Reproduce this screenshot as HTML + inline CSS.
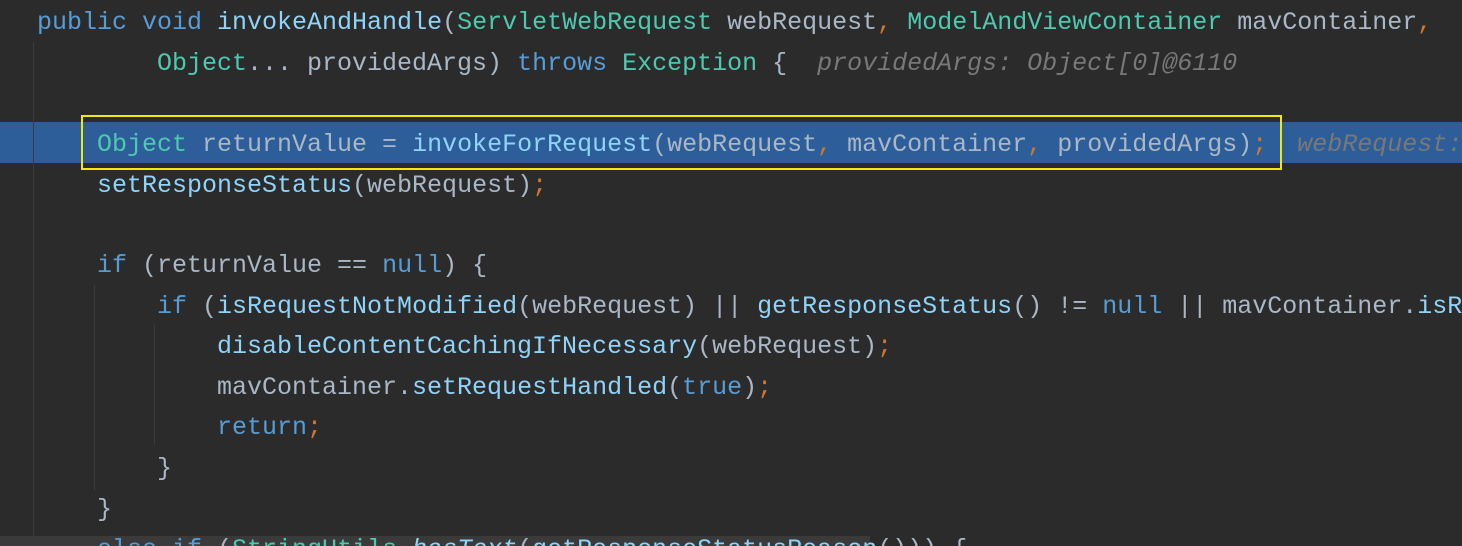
<!DOCTYPE html>
<html><head><meta charset="utf-8"><style>
html,body{margin:0;padding:0;width:1462px;height:546px;overflow:hidden;background:#2b2b2b;}
#w{position:relative;width:1462px;height:546px;overflow:hidden;}
.l{position:absolute;left:0;height:41px;line-height:41px;white-space:pre;font-family:"Liberation Mono",monospace;font-size:25px;color:#a9b7c6;}
.k{color:#569cd6}.m{color:#8fd3f8}.t{color:#4ec9b0}.o{color:#cc7832}.h{color:#787878;font-style:italic}
.g{position:absolute;width:1px;background:#3c3c3c}
</style></head><body><div id="w">
<div style="position:absolute;left:0;top:122px;width:1462px;height:41px;background:#2d5e99"></div>
<div class="g" style="left:33px;top:42px;height:500px"></div>
<div class="g" style="left:94px;top:285px;height:205px"></div>
<div class="g" style="left:154px;top:325px;height:120px"></div>
<div style="position:absolute;left:0;top:536px;width:870px;height:10px;background:#3a3a3a"></div>
<div class="l" style="top:2px;left:37px"><span class="k">public void </span><span class="m">invokeAndHandle</span>(<span class="t">ServletWebRequest</span> webRequest<span class="o">, </span><span class="t">ModelAndViewContainer</span> mavContainer<span class="o">,</span></div>
<div class="l" style="top:43px;left:157px"><span class="t">Object</span>... providedArgs) <span class="k">throws</span> <span class="t">Exception</span> {  <span class="h">providedArgs: Object[0]@6110</span></div>
<div class="l" style="top:124px;left:97px"><span class="t">Object</span> returnValue = <span class="m">invokeForRequest</span>(webRequest<span class="o">, </span>mavContainer<span class="o">, </span>providedArgs)<span class="o">;</span>  <span class="h">webRequest:</span></div>
<div class="l" style="top:165px;left:97px"><span class="m">setResponseStatus</span>(webRequest)<span class="o">;</span></div>
<div class="l" style="top:245px;left:97px"><span class="k">if</span> (returnValue == <span class="k">null</span>) {</div>
<div class="l" style="top:286px;left:157px"><span class="k">if</span> (<span class="m">isRequestNotModified</span>(webRequest) || <span class="m">getResponseStatus</span>() != <span class="k">null</span> || mavContainer.<span class="m">isRequestHandled</span>()) {</div>
<div class="l" style="top:326px;left:217px"><span class="m">disableContentCachingIfNecessary</span>(webRequest)<span class="o">;</span></div>
<div class="l" style="top:367px;left:217px">mavContainer.<span class="m">setRequestHandled</span>(<span class="k">true</span>)<span class="o">;</span></div>
<div class="l" style="top:407px;left:217px"><span class="k">return</span><span class="o">;</span></div>
<div class="l" style="top:448px;left:157px">}</div>
<div class="l" style="top:489px;left:97px">}</div>
<div class="l" style="top:529px;left:97px"><span class="k">else if</span> (<span class="t">StringUtils</span>.<span class="m" style="font-style:italic">hasText</span>(<span class="m">getResponseStatusReason</span>())) {</div>
<div style="position:absolute;left:81px;top:115px;width:1197px;height:51px;border:2px solid #f2e80a"></div>
</div></body></html>
